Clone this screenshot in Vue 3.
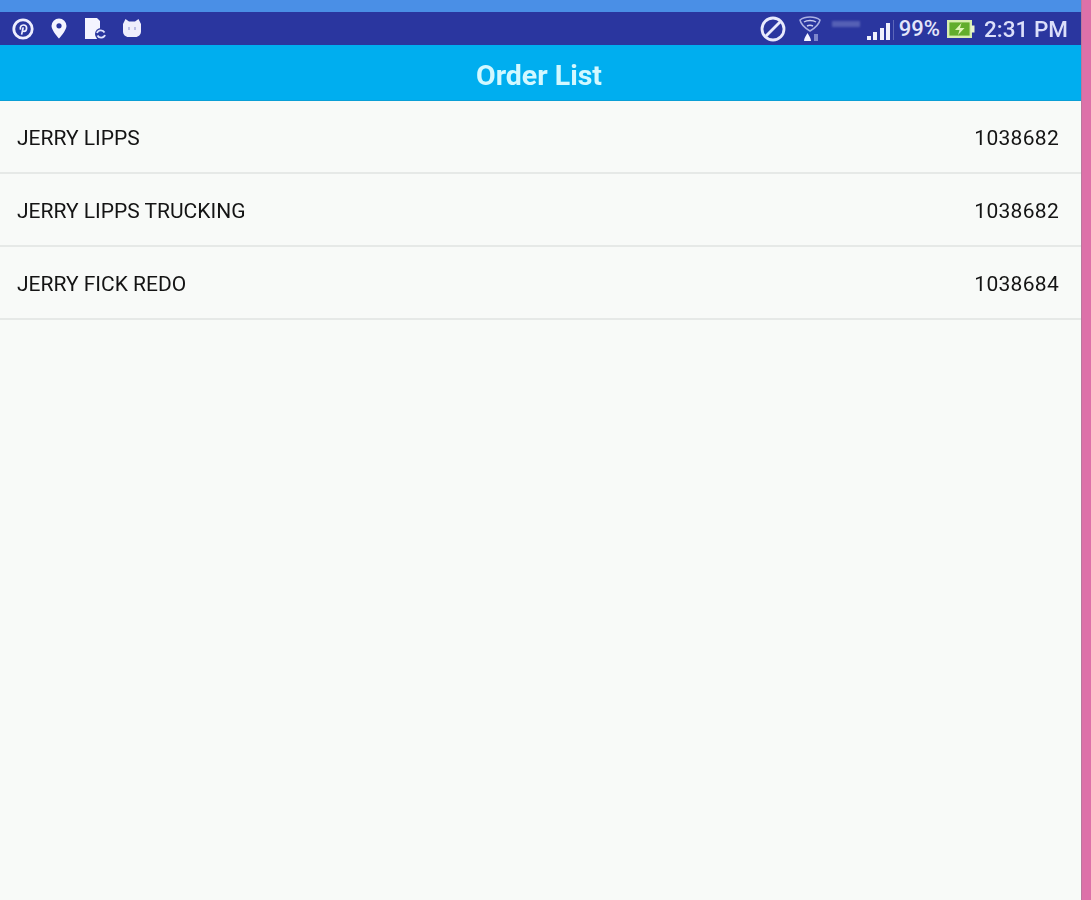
<script setup>
const orders = [
  { name: 'JERRY LIPPS', number: '1038682' },
  { name: 'JERRY LIPPS TRUCKING', number: '1038682' },
  { name: 'JERRY FICK REDO', number: '1038684' }
]
const bars = [4, 8, 12, 17]
</script>

<template>
  <div class="page">
    <main class="phone">
      <div class="top-edge"></div>
      <div class="status">
        <div class="icons-left">
          <svg class="ic-pin" width="22" height="22" viewBox="0 0 22 22">
            <circle cx="11" cy="11" r="9.200" fill="none" stroke="#eef" stroke-width="2.800" />
            <path d="M8.600 11.600c-1-2.600.6-4.600 2.800-4.600 2 0 3.200 1.300 3.200 3 0 2-1.200 3.400-2.700 3.400-.7 0-1.200-.4-1.400-.9M11.200 9.400 9.600 16.600" fill="none" stroke="#eef" stroke-width="1.700" />
          </svg>
          <svg class="ic-loc" width="16" height="21" viewBox="0 0 16 21">
            <path d="M8 .5A7.500 7.500 0 0 0 .5 8C.5 12.500 8 20.500 8 20.500S15.500 12.500 15.500 8A7.500 7.500 0 0 0 8 .5z" fill="#f4f4ff" />
            <circle cx="8" cy="7.800" r="2.600" fill="#2a369f" />
          </svg>
          <svg class="ic-doc" width="24" height="24" viewBox="0 0 24 24">
            <path d="M1 1h12l3 3v18H1z" fill="#f4f4ff" />
            <circle cx="17" cy="17" r="6" fill="#2a369f" />
            <path d="M13 16a4 3.500 0 0 1 7.500-.5M21 18a4 3.500 0 0 1-7.500.5" fill="none" stroke="#dfe3ff" stroke-width="1.800" />
          </svg>
          <svg class="ic-cat" width="20" height="21" viewBox="0 0 20 21">
            <path d="M1 6 3.500 1 7 3.500h6L16.500 1 19 6v7.500c0 3-2.500 5.500-5.500 5.500h-7C3.500 19 1 16.500 1 13.500z" fill="#eeeefc" />
            <path d="M7 9v3M13 9v3" stroke="#a4a9dc" stroke-width="1.400" />
          </svg>
        </div>
        <div class="icons-right">
          <svg class="ic-block" width="28" height="28" viewBox="0 0 28 28">
            <circle cx="14" cy="14" r="11" fill="none" stroke="#e8eafc" stroke-width="2.800" />
            <path d="M7 21 21 7" stroke="#e8eafc" stroke-width="2.800" />
          </svg>
          <svg class="ic-wifi" width="22" height="26" viewBox="0 0 22 26">
            <path d="M1 4c5-4 15-4 20 0-1 5-5 8-10 11C6 12 2 9 1 4z" fill="none" stroke="#aab0e4" stroke-width="1.500" />
            <path d="M5 6c3-2 9-2 12 0M8 10c2-1 4-1 6 0" fill="none" stroke="#c9cdf0" stroke-width="1.500" />
            <path d="M5 25c0-3 2-5 3.500-8 1.500 3 3.500 5 3.500 8z" fill="#f4f4ff" />
            <rect x="15" y="18" width="4" height="7" fill="#7d86cc" />
          </svg>
          <div class="speed"></div>
          <div class="signal">
            <i v-for="h in bars" :key="h" :style="{ height: h + 'px' }"></i>
            <b></b>
          </div>
          <span class="pct">99%</span>
          <svg class="ic-batt" width="28" height="18" viewBox="0 0 28 18">
            <rect x="1.200" y="1.200" width="22.600" height="15.600" fill="#62ad2c" stroke="#d7eeb0" stroke-width="2.400" />
            <rect x="24" y="5.500" width="3.500" height="7" fill="#e8f4cf" />
            <path d="M14.500 3 8 10h4.500L11 15l6.500-7H13z" fill="#dff5b8" />
          </svg>
          <span class="clock">2:31 PM</span>
        </div>
      </div>
      <header class="title-bar">Order List</header>
      <ul class="orders">
        <li v-for="(o, i) in orders" :key="i" class="order">
          <span>{{ o.name }}</span>
          <span class="num">{{ o.number }}</span>
        </li>
      </ul>
    </main>
    <div class="edge"></div>
  </div>
</template>

<style scoped>
.page {
  display: flex;
  height: 900px;
  overflow: hidden;
  background: #f8faf8;
  font-family: Roboto, "Liberation Sans", sans-serif;
}
.phone {
  flex: 1;
  min-width: 0;
  filter: blur(0.6px);
}
.edge {
  width: 9px;
  background: #dd71a9;
  border-left: 1px solid #b8799c;
}
.top-edge {
  height: 12px;
  background: #4a8fe6;
}
.status {
  height: 33px;
  background: #2a369f;
  display: flex;
  align-items: center;
  justify-content: space-between;
  padding: 0 13px 0 12px;
}
.icons-left,
.icons-right {
  display: flex;
  align-items: center;
}
.ic-loc {
  margin-left: 17px;
}
.ic-doc {
  margin-left: 17px;
}
.ic-cat {
  margin-left: 14px;
}
.ic-wifi {
  margin-left: 12px;
}
.speed {
  width: 28px;
  height: 6px;
  margin: -9px 0 0 11px;
  background: #5560b5;
  filter: blur(1px);
}
.signal {
  display: flex;
  align-items: flex-end;
  gap: 2.500px;
  height: 20px;
  margin: 0 0 -3px 7px;
}
.signal i {
  display: block;
  width: 4px;
  background: #f0f1fc;
}
.signal b {
  display: block;
  width: 1px;
  height: 20px;
  background: #5d67b8;
}
.pct {
  color: #e4e6fa;
  font-size: 22px;
  font-weight: 500;
  margin-left: 5px;
}
.ic-batt {
  margin-left: 7px;
}
.clock {
  color: #dcdffa;
  font-size: 22.500px;
  font-weight: 500;
  margin-left: 9px;
}
.title-bar {
  height: 56px;
  background: #00aeef;
  color: #d2f8ff;
  font-size: 28.500px;
  font-weight: 700;
  display: flex;
  align-items: center;
  justify-content: center;
  box-sizing: border-box;
  padding: 5px 3px 0 0;
  border-bottom: 1px solid #0a9fd6;
}
.orders {
  list-style: none;
  margin: 0;
  padding: 0;
}
.order {
  height: 73px;
  box-sizing: border-box;
  border-bottom: 2px solid #e6e9e7;
  display: flex;
  align-items: center;
  justify-content: space-between;
  padding: 3px 22px 0 17px;
  font-size: 21px;
  color: #141414;
}
.num {
  letter-spacing: 0.300px;
}
</style>
